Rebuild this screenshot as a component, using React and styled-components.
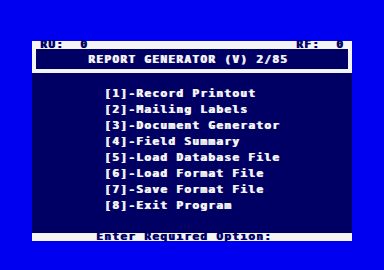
import React from 'react';
import styled, { createGlobalStyle } from 'styled-components';

const BLUE = '#0000f0';
const NAVY = '#000064';
const PAPER = '#f4f4f4';

const GlobalStyle = createGlobalStyle`
  html, body {
    margin: 0;
    padding: 0;
    background: ${BLUE};
  }
  body {
    width: 384px;
    height: 270px;
    overflow: hidden;
  }
`;

// every line of text sits on the 8px character grid of the old machine
const Text = styled.span`
  display: block;
  font-family: 'DejaVu Sans Mono', 'Liberation Mono', monospace;
  font-weight: 700;
  font-size: 11px;
  letter-spacing: 1.38px;
  line-height: 8px;
  height: 8px;
  white-space: pre;
  color: ${(p) => p.$ink || PAPER};
  text-shadow: 1px 0 0 ${(p) => p.$ink || PAPER};
`;

const Screen = styled.div`
  padding: 41px 0 0 32px;
`;

const Panel = styled.div`
  width: 320px;
  display: flex;
  flex-direction: column;
`;

const StatusBar = styled.div`
  background: ${PAPER};
  height: 8px;
  display: flex;
  justify-content: space-between;
  padding: 0 8px;
`;

const TitleFrame = styled.div`
  background: ${PAPER};
  padding: 0 4px 4px;
`;

const TitleBox = styled.div`
  background: ${NAVY};
  height: 20px;
  box-sizing: border-box;
  padding: 7px 0 0 52px;
`;

const Menu = styled.div`
  background: ${NAVY};
  height: 160px;
  box-sizing: border-box;
  padding: 17px 0 0 72px;
  display: flex;
  flex-direction: column;
  gap: 8px;
`;

const PromptBar = styled.div`
  background: ${PAPER};
  height: 8px;
  padding-left: 64px;
`;

const options = [
  'Record Printout',
  'Mailing Labels',
  'Document Generator',
  'Field Summary',
  'Load Database File',
  'Load Format File',
  'Save Format File',
  'Exit Program',
];

const App = () => {
  return (
    <Screen>
      <GlobalStyle />
      <Panel>
        <StatusBar>
          <Text $ink={NAVY}>{'RU:  0'}</Text>
          <Text $ink={NAVY}>{'RF:  0'}</Text>
        </StatusBar>
        <TitleFrame>
          <TitleBox>
            <Text>REPORT GENERATOR (V) 2/85</Text>
          </TitleBox>
        </TitleFrame>
        <Menu>
          {options.map((label, i) => (
            <Text key={label}>{`[${i + 1}]-${label}`}</Text>
          ))}
        </Menu>
        <PromptBar>
          <Text $ink={NAVY}>Enter Required Option:</Text>
        </PromptBar>
      </Panel>
    </Screen>
  );
};

export default App;
